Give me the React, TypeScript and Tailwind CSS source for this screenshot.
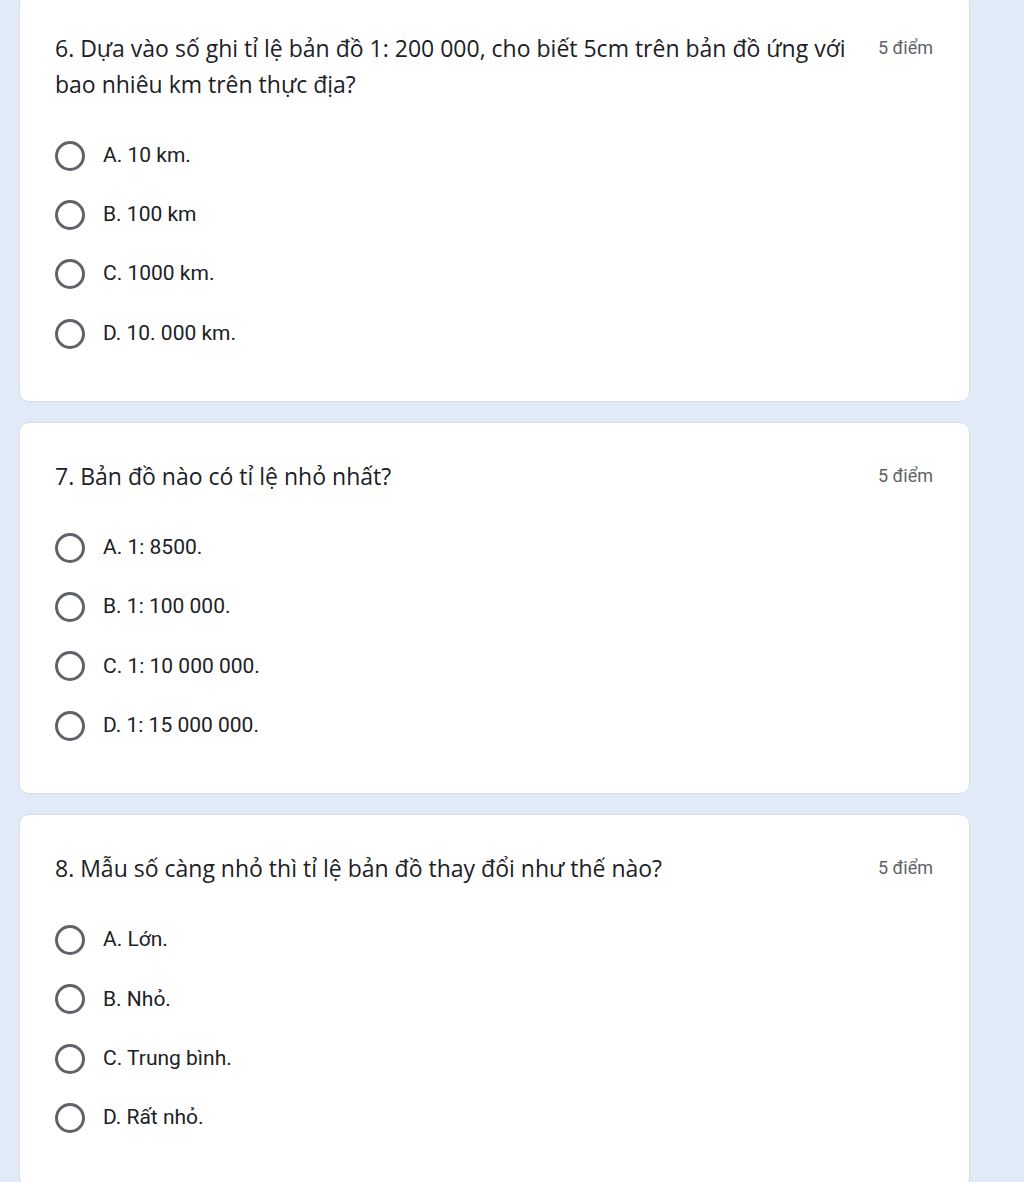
const questions = [
  {
    title: '6. Dựa vào số ghi tỉ lệ bản đồ 1: 200 000, cho biết 5cm trên bản đồ ứng với bao nhiêu km trên thực địa?',
    options: ['A. 10 km.', 'B. 100 km', 'C. 1000 km.', 'D. 10. 000 km.'],
  },
  {
    title: '7. Bản đồ nào có tỉ lệ nhỏ nhất?',
    options: ['A. 1: 8500.', 'B. 1: 100 000.', 'C. 1: 10 000 000.', 'D. 1: 15 000 000.'],
  },
  {
    title: '8. Mẫu số càng nhỏ thì tỉ lệ bản đồ thay đổi như thế nào?',
    options: ['A. Lớn.', 'B. Nhỏ.', 'C. Trung bình.', 'D. Rất nhỏ.'],
  },
]

function Radio() {
  return <span className="block w-[30px] h-[30px] shrink-0 rounded-full border-[3px] border-[#5f6368]" />
}

function QuestionCard({ title, options }: { title: string; options: string[] }) {
  return (
    <section className="bg-white border border-[#dadce0] rounded-[10px] pl-[35px] pr-[36px] pt-[35px] pb-[38px]">
      <div className="flex items-start gap-5">
        <h2 className="flex-1 text-[23px] leading-[36px] text-[#202124]" style={{ fontFamily: '"Open Sans", sans-serif' }}>
          {title}
        </h2>
        <span className="text-[18px] leading-[36px] text-[#5f6368] whitespace-nowrap">5 điểm</span>
      </div>

      <div className="mt-[24px]">
        {options.map((opt) => (
          <label key={opt} className="flex items-center gap-[18px] h-[59.3px]">
            <Radio />
            <span className="text-[21px] text-[#202124]">{opt}</span>
          </label>
        ))}
      </div>
    </section>
  )
}

export default function App() {
  return (
    <div className="min-h-[1182px] bg-[#e1ebf8] pl-[19px] pr-[54px] overflow-hidden" style={{ fontFamily: 'Roboto, "Liberation Sans", sans-serif' }}>
      <div className="-mt-[6px] flex flex-col gap-5">
        {questions.map((q) => (
          <QuestionCard key={q.title} title={q.title} options={q.options} />
        ))}
      </div>
    </div>
  )
}
